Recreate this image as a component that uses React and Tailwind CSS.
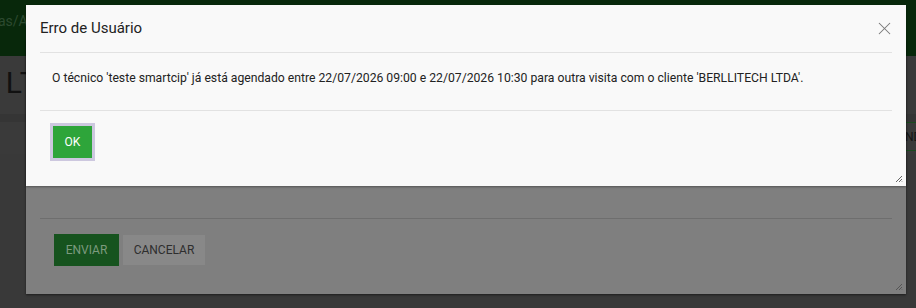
import { X } from "lucide-react";

const font = { fontFamily: "Roboto, 'Liberation Sans', sans-serif" };

function ResizeGrip({ color }) {
  return (
    <svg width="8" height="8" viewBox="0 0 8 8" className="absolute right-[3px] bottom-[3px]">
      <path d="M7 1 L1 7 M7 4 L4 7 M7 6.5 L6.5 7" stroke={color} strokeWidth="1" />
    </svg>
  );
}

export default function App() {
  return (
    <div
      className="relative w-[916px] h-[308px] overflow-hidden bg-[#393939] text-[#222]"
      style={font}
    >
      {/* dimmed page behind */}
      <div className="flex h-[56px] items-center bg-[#08280b] text-[14px] text-[#2d4a30]">
        <span className="-ml-[2px] -mt-[14px]">as/A</span>
      </div>
      <div className="flex h-[58px] items-center bg-[#3a3a3a] text-[30px] text-[#111]">
        <span className="-ml-[13px] mt-[-6px] tracking-[2px]">l LT</span>
      </div>
      <div className="h-[8px] bg-[#353535]" />
      <div className="h-[32px] bg-[#3a3a3a]" />
      <div className="h-[154px] bg-[#393939]" />

      {/* right side button peeking out */}
      <div className="absolute left-[900px] top-[122px] flex h-[29px] w-[30px] items-center border-y border-[#1b4a1f] bg-[#3a3a3a] pl-[5px] text-[12px] text-[#141414]">
        ND
      </div>

      {/* underlying dialog (dimmed) */}
      <div className="absolute left-[26px] top-[40px] flex h-[254px] w-[880px] flex-col justify-end bg-[#7f7f7f] shadow-[0_1px_2px_rgba(0,0,0,0.5)]">
        <div className="mx-[14px] border-t border-[#6e6e6e]" />
        <div className="flex gap-[4px] px-[28px] pt-[15px] pb-[28px]">
          <button className="h-[32px] w-[65px] bg-[#16531e] text-[12px] text-[#7c9a7e]">
            ENVIAR
          </button>
          <button className="mt-[1px] h-[30px] w-[82px] bg-[#888888] text-[12px] text-[#2e2e2e]">
            CANCELAR
          </button>
        </div>
        <ResizeGrip color="#555" />
      </div>

      {/* active dialog */}
      <div className="absolute left-[26px] top-[5px] flex h-[181px] w-[880px] flex-col bg-[#f9f9f9] shadow-[0_1px_2px_rgba(0,0,0,0.35)]">
        <div className="mx-[14px] flex h-[48px] items-center justify-between border-b border-[#e2e2e2]">
          <h1 className="text-[15px] text-[#222]">Erro de Usuário</h1>
          <X size={21} strokeWidth={1.2} className="mr-[-3px] text-[#777]" />
        </div>
        <div className="mx-[14px] flex h-[58px] items-center border-b border-[#e2e2e2] px-[12px] pb-[7px] text-[12.2px] text-[#222]">
          O técnico 'teste smartcip' já está agendado entre 22/07/2026 09:00 e 22/07/2026 10:30 para outra visita com o cliente 'BERLLITECH LTDA'.
        </div>
        <div className="px-[24px] pt-[12px]">
          <button className="h-[38px] w-[45px] border-[3px] border-[#cdc8df] bg-[#2ea53a] text-[12px] text-white">
            OK
          </button>
        </div>
        <ResizeGrip color="#666" />
      </div>
    </div>
  );
}
